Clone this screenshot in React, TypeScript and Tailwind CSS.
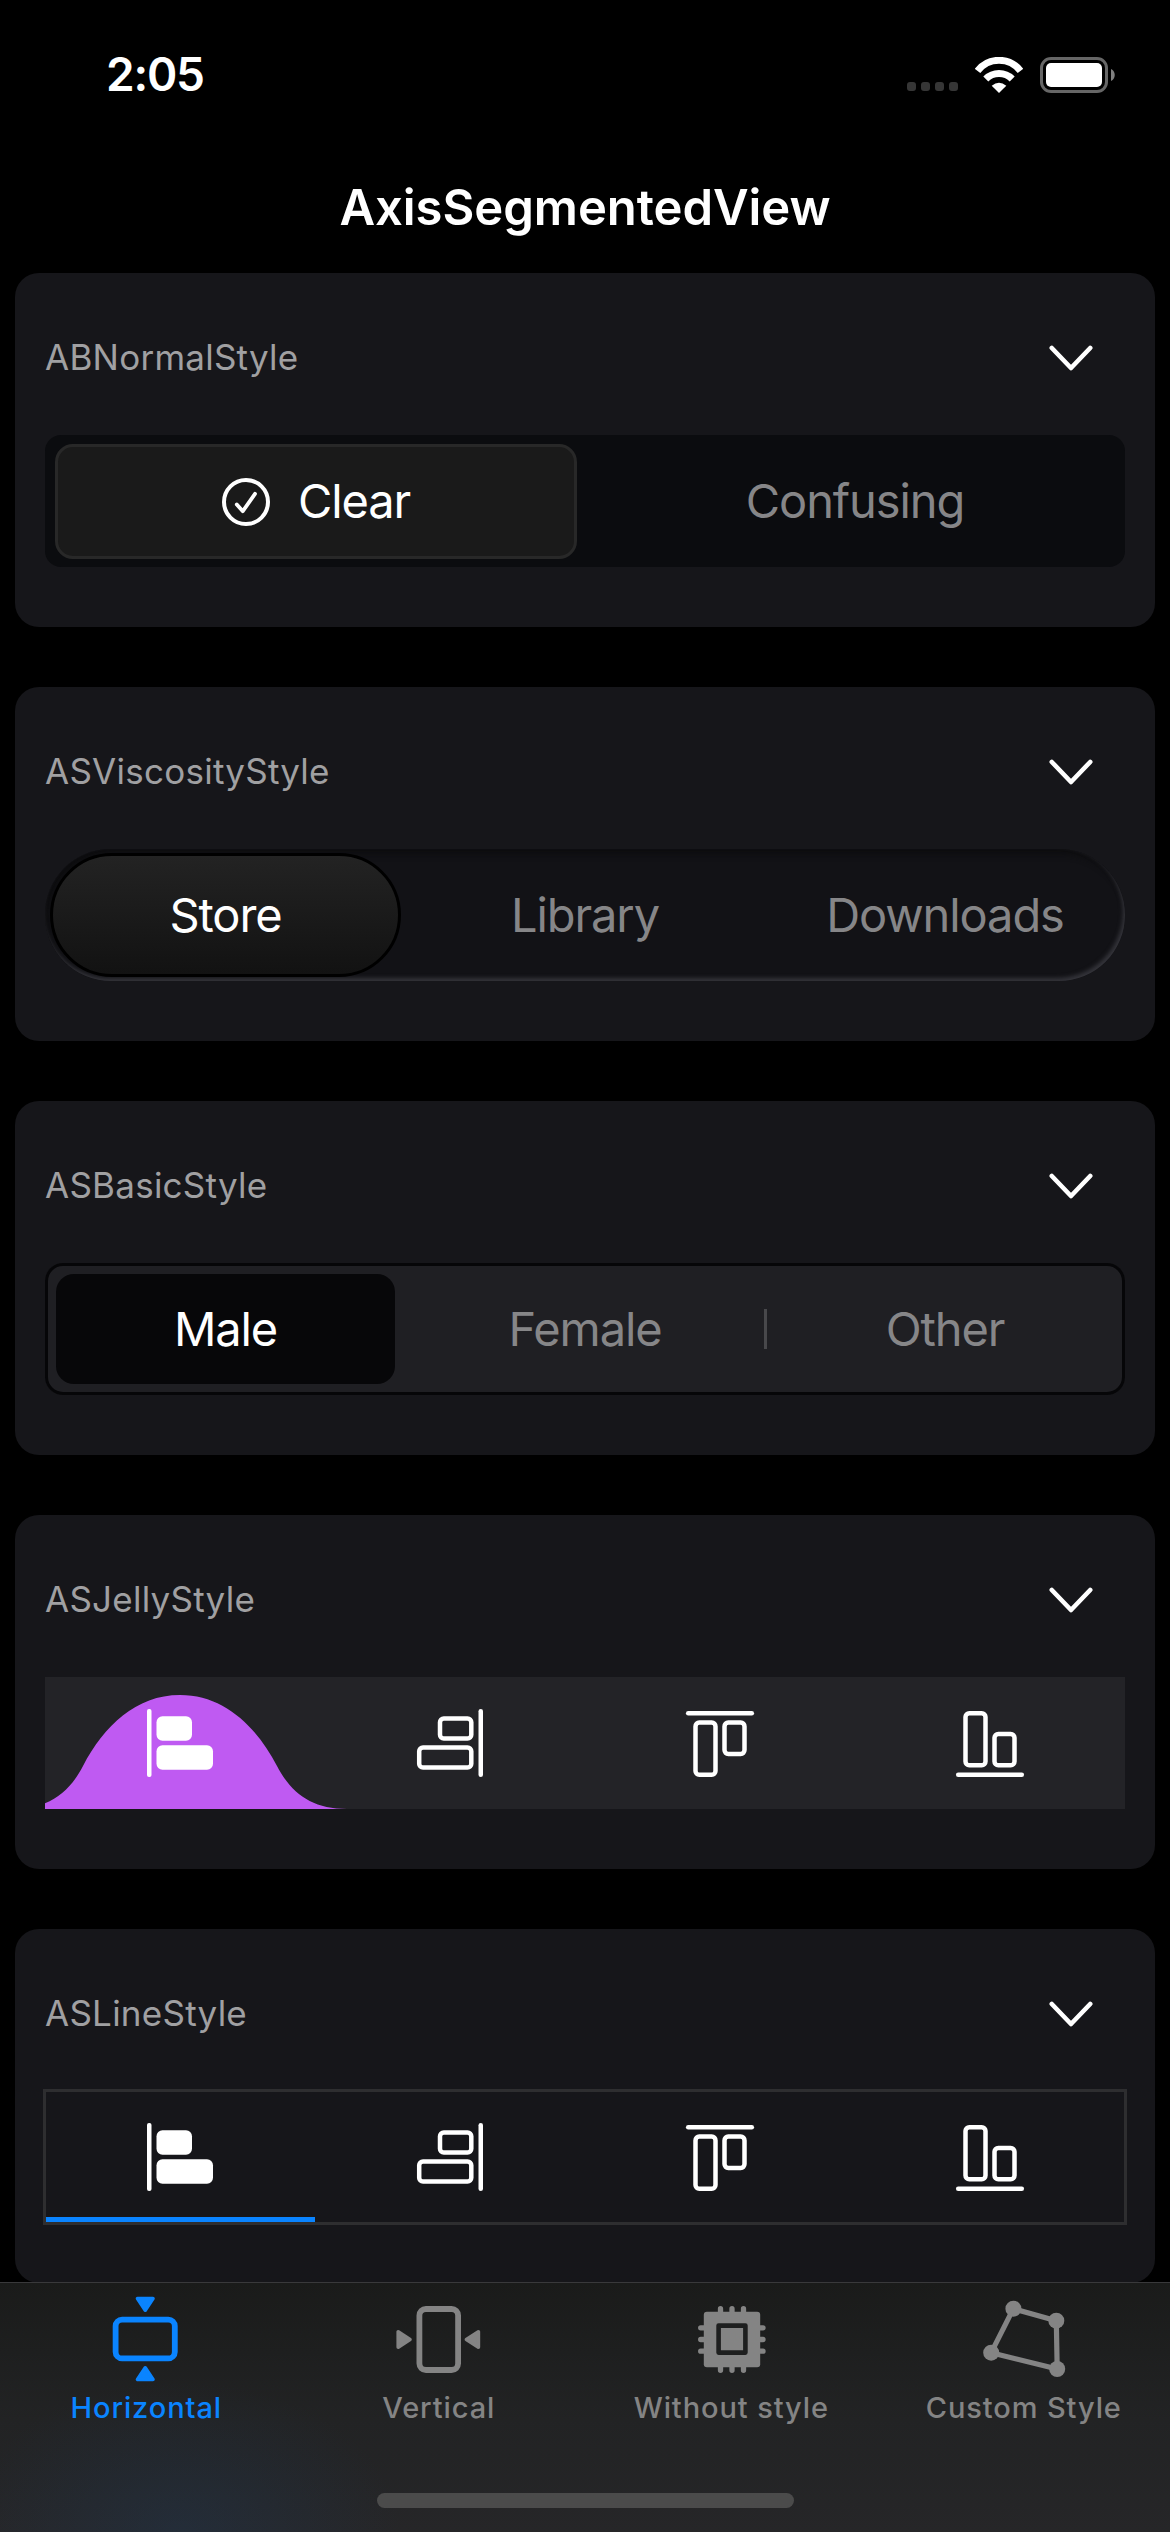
import type { ReactNode } from "react";

function StatusIcons() {
  return (
    <div className="flex items-center">
      <div className="mt-6 flex gap-[5px]">
        {[0, 1, 2, 3].map((i) => (
          <span key={i} className="h-[9px] w-[9px] rounded-[3px] bg-[#363636]" />
        ))}
      </div>
      <svg className="ml-[17px] h-9 w-12" viewBox="0 0 48 36" fill="none">
        <path d="M2.5 14A27 27 0 0 1 45.5 14" stroke="#fff" strokeWidth="7" />
        <path d="M10.8 22A18.6 18.6 0 0 1 37.2 22" stroke="#fff" strokeWidth="7" />
        <path d="M24 36L16.7 28.7Q24 22.7 31.3 28.7Z" fill="#fff" />
      </svg>
      <svg className="ml-[17px] h-9 w-[75px]" viewBox="0 0 75 36" fill="none">
        <rect x="1.5" y="1.5" width="65" height="33" rx="9.5" stroke="#666" strokeWidth="3" />
        <rect x="6" y="6" width="56" height="24" rx="5" fill="#fff" />
        <path d="M71 12C76 14 76 22 71 24Z" fill="#7f7f7f" />
      </svg>
    </div>
  );
}

function Chevron() {
  return (
    <svg className="mt-[2px] mr-[32px] h-[26px] w-11" viewBox="0 0 44 26" fill="none">
      <path
        d="M2.8 3L22 23L41.2 3"
        stroke="#fff"
        strokeWidth="4.6"
        strokeLinecap="round"
        strokeLinejoin="round"
      />
    </svg>
  );
}

function Card({ title, children }: { title: string; children: ReactNode }) {
  return (
    <section className="h-[354px] shrink-0 rounded-[24px] bg-[#16161a] px-[30px]">
      <div className="flex h-[162px] items-center justify-between pt-[6px]">
        <h2 className="text-[35px] tracking-[0.25px] text-[#a0a0a2]">{title}</h2>
        <Chevron />
      </div>
      {children}
    </section>
  );
}

function AlignLeftFilled() {
  return (
    <svg className="h-[72px] w-[72px]" viewBox="0 0 72 72" fill="#fff">
      <rect x="3" y="2" width="4.5" height="68" rx="2" />
      <rect x="12.5" y="9.3" width="35.5" height="24.4" rx="6" />
      <rect x="12.5" y="38.3" width="56.5" height="24.4" rx="6" />
    </svg>
  );
}

function AlignRight() {
  return (
    <svg className="h-[72px] w-[72px]" viewBox="0 0 72 72" fill="none" stroke="#fff" strokeWidth="4.5">
      <path d="M66.75 4.2V67.8" strokeLinecap="round" />
      <rect x="26" y="11.5" width="31.3" height="20" rx="3.8" />
      <rect x="5.2" y="40.5" width="52.1" height="20" rx="3.8" />
    </svg>
  );
}

function AlignTop() {
  return (
    <svg className="h-[72px] w-[72px]" viewBox="0 0 72 72" fill="none" stroke="#fff" strokeWidth="4.5">
      <path d="M4.2 6.2H67.8" strokeLinecap="round" />
      <rect x="11.5" y="15.6" width="20" height="52.1" rx="3.8" />
      <rect x="40.5" y="15.6" width="20" height="31.3" rx="3.8" />
    </svg>
  );
}

function AlignBottom() {
  return (
    <svg className="h-[72px] w-[72px]" viewBox="0 0 72 72" fill="none" stroke="#fff" strokeWidth="4.5">
      <rect x="11.5" y="6.2" width="20" height="52.1" rx="3.8" />
      <rect x="40.5" y="27" width="20" height="31.3" rx="3.8" />
      <path d="M4.2 67.7H67.8" strokeLinecap="round" />
    </svg>
  );
}

function AlignIcons() {
  return (
    <div className="relative grid h-[132px] grid-cols-4 place-items-center">
      <AlignLeftFilled />
      <AlignRight />
      <AlignTop />
      <AlignBottom />
    </div>
  );
}

function HorizontalIcon() {
  return (
    <svg className="h-[90px] w-[90px]" viewBox="0 0 90 90" fill="none" stroke="currentColor">
      <path d="M36.5 4.5H52L44.25 16.2Z" fill="currentColor" strokeWidth="3.6" strokeLinejoin="round" />
      <rect x="14.6" y="25.6" width="59.2" height="38.8" rx="6.5" strokeWidth="5.8" />
      <path d="M36.5 85.5H52L44.25 73.8Z" fill="currentColor" strokeWidth="3.6" strokeLinejoin="round" />
    </svg>
  );
}

function VerticalIcon() {
  return (
    <svg className="h-[90px] w-[90px]" viewBox="0 0 90 90" fill="none" stroke="currentColor">
      <path d="M4.2 37.8V53.2L16 45.5Z" fill="currentColor" strokeWidth="3.6" strokeLinejoin="round" />
      <rect x="25.4" y="15" width="38.7" height="61" rx="6.5" strokeWidth="5.8" />
      <path d="M84.4 37.8V53.2L72.4 45.5Z" fill="currentColor" strokeWidth="3.6" strokeLinejoin="round" />
    </svg>
  );
}

function ChipIcon() {
  return (
    <svg className="h-[90px] w-[90px]" viewBox="0 0 90 90" fill="none" stroke="currentColor">
      <path
        d="M34.5 14.7V76.3M46 14.7V76.3M57.5 14.7V76.3M14.7 33.8H77M14.7 45.5H77M14.7 57.2H77"
        strokeWidth="5.3"
        strokeLinecap="round"
      />
      <rect x="17.8" y="17.8" width="56.4" height="55.4" rx="3" fill="currentColor" stroke="none" />
      <rect x="32.6" y="31.6" width="26.8" height="27" stroke="#1e1f1f" strokeWidth="4.6" strokeLinejoin="round" />
    </svg>
  );
}

function PolygonIcon() {
  return (
    <svg className="h-[90px] w-[90px]" viewBox="0 0 90 90" fill="none" stroke="currentColor">
      <path d="M34.4 14.7L77.3 26.7L78.2 75L12.2 58.7Z" strokeWidth="5.2" strokeLinejoin="round" />
      <g fill="currentColor" stroke="none">
        <circle cx="34.4" cy="14.7" r="8" />
        <circle cx="77.3" cy="26.7" r="8" />
        <circle cx="78.2" cy="75" r="8" />
        <circle cx="12.2" cy="58.7" r="8" />
      </g>
    </svg>
  );
}

const tabs = [
  { label: "Horizontal", icon: <HorizontalIcon />, color: "text-[#0a84ff]" },
  { label: "Vertical", icon: <VerticalIcon />, color: "text-[#848484]" },
  { label: "Without style", icon: <ChipIcon />, color: "text-[#848484]" },
  { label: "Custom Style", icon: <PolygonIcon />, color: "text-[#848484]" },
];

export default function App() {
  return (
    <div className="flex h-[2532px] w-[1170px] flex-col overflow-hidden bg-black font-['Inter',sans-serif] antialiased">
      <header className="h-[273px] shrink-0">
        <div className="flex h-[149px] items-center justify-between pr-[55px] pl-[106px]">
          <span className="text-[46px] font-semibold tracking-[-1.2px] text-white">2:05</span>
          <StatusIcons />
        </div>
        <h1 className="flex h-[117px] items-center justify-center text-[49px] font-semibold tracking-[-0.05px] text-white">
          AxisSegmentedView
        </h1>
      </header>

      <main className="flex shrink-0 flex-col gap-[60px] px-[15px]">
        <Card title="ABNormalStyle">
          <div className="grid h-[132px] grid-cols-2 rounded-[16px] bg-[#0b0c0f] text-[47px] tracking-[-1.1px]">
            <div className="mt-[9px] mr-[8px] mb-2 ml-[10px] flex items-center justify-center rounded-[18px] border-[3px] border-[#282828] bg-[#1a1a1a] text-white">
              <svg className="mr-[28px] h-12 w-12" viewBox="0 0 48 48" fill="none" stroke="#fff">
                <circle cx="24" cy="24" r="22" strokeWidth="4" />
                <path d="M14.8 26.5L20.8 33.2L33 15.8" strokeWidth="3.8" strokeLinecap="round" strokeLinejoin="round" />
              </svg>
              <span>Clear</span>
            </div>
            <div className="flex items-center justify-center text-[#868688]">Confusing</div>
          </div>
        </Card>

        <Card title="ASViscosityStyle">
          <div className="grid h-[132px] grid-cols-3 rounded-[66px] bg-[#121216] text-[47px] tracking-[-1.1px] shadow-[inset_-2px_-3px_4px_#35353b,inset_4px_5px_6px_#0d0d0f]">
            <div className="mt-[4px] mr-[4px] mb-[4px] ml-[5px] flex items-center justify-center rounded-[62px] border-[3px] border-black bg-linear-to-b from-[#232323] to-[#121212] text-white">
              Store
            </div>
            <div className="flex items-center justify-center text-[#868688]">Library</div>
            <div className="flex items-center justify-center text-[#868688]">Downloads</div>
          </div>
        </Card>

        <Card title="ASBasicStyle">
          <div className="grid h-[132px] grid-cols-3 rounded-[18px] bg-[#1f1f23] text-[47px] tracking-[-1.1px] shadow-[inset_0_0_0_3px_#060608]">
            <div className="my-[11px] mr-[10px] ml-[11px] flex items-center justify-center rounded-[18px] bg-[#070709] text-white">
              Male
            </div>
            <div className="relative flex items-center justify-center text-[#868688]">
              Female
              <span className="absolute right-0 h-10 w-[3px] translate-x-[2px] bg-[#48484b]" />
            </div>
            <div className="flex items-center justify-center text-[#868688]">Other</div>
          </div>
        </Card>

        <Card title="ASJellyStyle">
          <div className="relative h-[132px] bg-[#232327]">
            <svg className="absolute top-0 left-0 h-[132px] w-[320px]" viewBox="0 0 320 132">
              <path
                d="M-32 132C3 132 24 116 38 89C59 49 91 18 135 18C179 18 211 49 232 89C246 116 267 132 302 132Z"
                fill="#bf5af2"
              />
            </svg>
            <AlignIcons />
          </div>
        </Card>

        <Card title="ASLineStyle">
          <div className="relative h-[132px] outline-[3px] -outline-offset-[1.5px] outline-[#2e2e30]">
            <AlignIcons />
            <span className="absolute bottom-[1px] left-[1px] h-[5px] w-[269px] bg-[#0a84ff]" />
          </div>
        </Card>
      </main>

      <nav className="relative -mt-px flex h-[250px] shrink-0 flex-col items-center border-t border-[#39393b] bg-[radial-gradient(ellipse_220px_150px_at_180px_100%,rgba(32,58,88,0.35),transparent),linear-gradient(to_bottom,#1a1b1a,#222324_55%,#262628)]">
        <div className="grid w-full grid-cols-4 pt-[11px]">
          {tabs.map((tab) => (
            <div key={tab.label} className={`flex flex-col items-center ${tab.color}`}>
              {tab.icon}
              <span className="mt-[6px] text-[29px] leading-[36px] font-medium tracking-[0.9px] whitespace-nowrap">
                {tab.label}
              </span>
            </div>
          ))}
        </div>
        <span className="mt-[67px] h-[15px] w-[417px] rounded-full bg-[#4b4b4b]" />
      </nav>
    </div>
  );
}
